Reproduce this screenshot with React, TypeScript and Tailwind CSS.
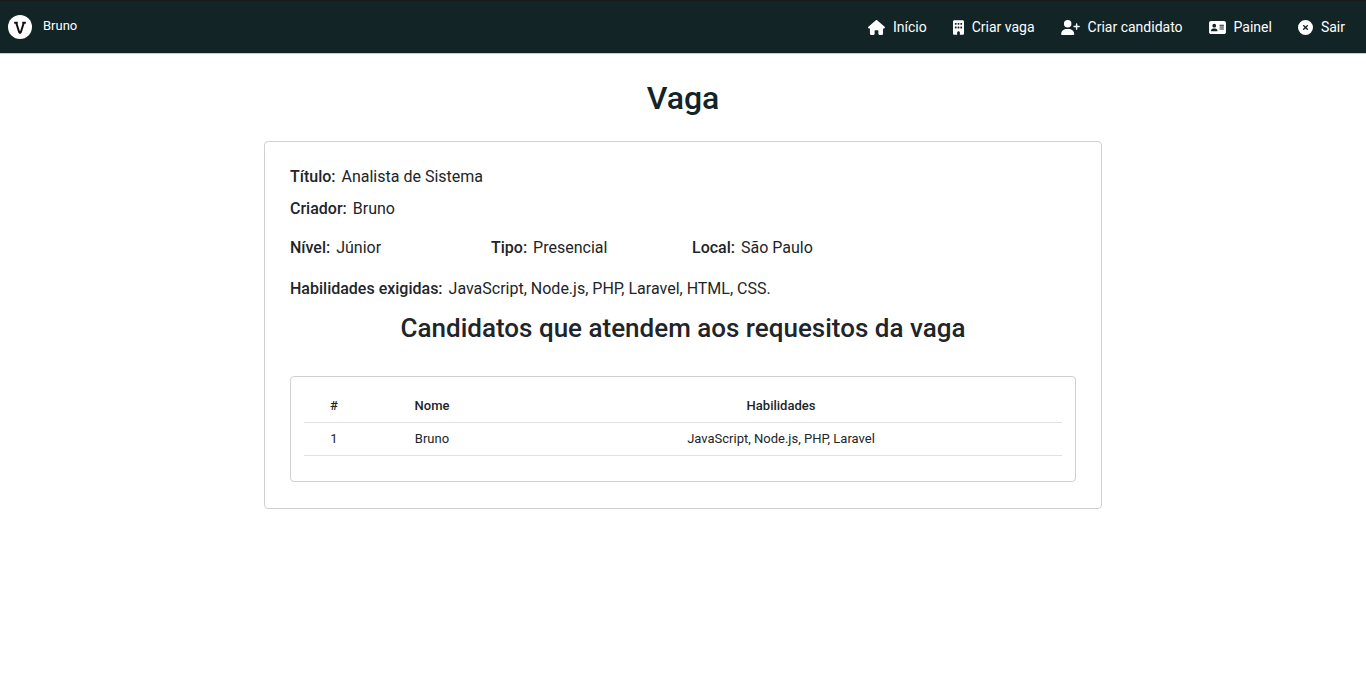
import React from "react";
import { FaHouse, FaBuilding, FaUserPlus, FaAddressCard, FaCircleXmark } from "react-icons/fa6";

const links = [
  { label: "Início", Icon: FaHouse, width: "w-[17px]" },
  { label: "Criar vaga", Icon: FaBuilding, width: "w-[11px]" },
  { label: "Criar candidato", Icon: FaUserPlus, width: "w-[19px]" },
  { label: "Painel", Icon: FaAddressCard, width: "w-[17px]" },
  { label: "Sair", Icon: FaCircleXmark, width: "w-[15px]" },
];

const candidates = [{ id: 1, name: "Bruno", skills: "JavaScript, Node.js, PHP, Laravel" }];

function Logo() {
  return (
    <svg viewBox="0 0 24 24" className="size-6" aria-hidden="true">
      <circle cx="12" cy="12" r="12" fill="#fff" />
      <path
        d="M6.2 7.7h3.6M14.2 7.7h3.6M8.2 7.7l3 9.6q.8 1.2 1.6 0L15.8 7.7"
        fill="none"
        stroke="#111"
        strokeWidth="2"
        strokeLinejoin="round"
      />
    </svg>
  );
}

function Field({ label, value }: { label: string; value: string }) {
  return (
    <p>
      <strong className="pr-0.5 font-medium">{label}:</strong> {value}
    </p>
  );
}

export default function App() {
  return (
    <div className="font-['Roboto',sans-serif] text-base leading-6 text-[#212529]">
      <header className="flex items-center justify-between border-t border-b border-t-[#1a1a1a] border-b-[#c8cccc] bg-[#122426] pt-3.5 pr-[21px] pb-3.5 pl-2 text-white">
        <a href="#" className="flex items-center gap-[11px] text-[13px] leading-5">
          <Logo />
          <span className="pb-0.5">Bruno</span>
        </a>
        <nav className="flex items-center gap-[26px] text-sm">
          {links.map(({ label, Icon, width }) => (
            <a key={label} href="#" className="flex items-center gap-2">
              <Icon className={`h-[15px] ${width}`} />
              {label}
            </a>
          ))}
        </nav>
      </header>

      <main className="mx-auto max-w-[838px] pt-6">
        <h1 className="text-center text-[32px] leading-10 font-medium text-[#122426]">Vaga</h1>

        <section className="mt-[23px] rounded border border-[#ced0d1] px-[25px] pt-[23px] pb-[26px]">
          <Field label="Título" value="Analista de Sistema" />
          <div className="mt-2">
            <Field label="Criador" value="Bruno" />
          </div>
          <div className="mt-[15px] grid grid-cols-[201px_201px_1fr]">
            <Field label="Nível" value="Júnior" />
            <Field label="Tipo" value="Presencial" />
            <Field label="Local" value="São Paulo" />
          </div>
          <div className="mt-[17px]">
            <Field label="Habilidades exigidas" value="JavaScript, Node.js, PHP, Laravel, HTML, CSS." />
          </div>

          <h2 className="mt-[11px] text-center text-[26px] leading-8 font-medium">
            Candidatos que atendem aos requesitos da vaga
          </h2>

          <div className="mt-8 rounded border border-[#ced0d1] px-[13px] pt-[13px] pb-[25px]">
            <table className="w-full table-fixed text-center text-[13px] leading-5">
              <colgroup>
                <col className="w-[60px]" />
                <col className="w-[136px]" />
                <col />
              </colgroup>
              <thead>
                <tr className="border-b border-[#dee2e6]">
                  <th className="py-1.5 font-medium">#</th>
                  <th className="py-1.5 font-medium">Nome</th>
                  <th className="py-1.5 font-medium">Habilidades</th>
                </tr>
              </thead>
              <tbody>
                {candidates.map((c) => (
                  <tr key={c.id} className="border-b border-[#dee2e6]">
                    <td className="py-1.5">{c.id}</td>
                    <td className="py-1.5">{c.name}</td>
                    <td className="py-1.5">{c.skills}</td>
                  </tr>
                ))}
              </tbody>
            </table>
          </div>
        </section>
      </main>
    </div>
  );
}
